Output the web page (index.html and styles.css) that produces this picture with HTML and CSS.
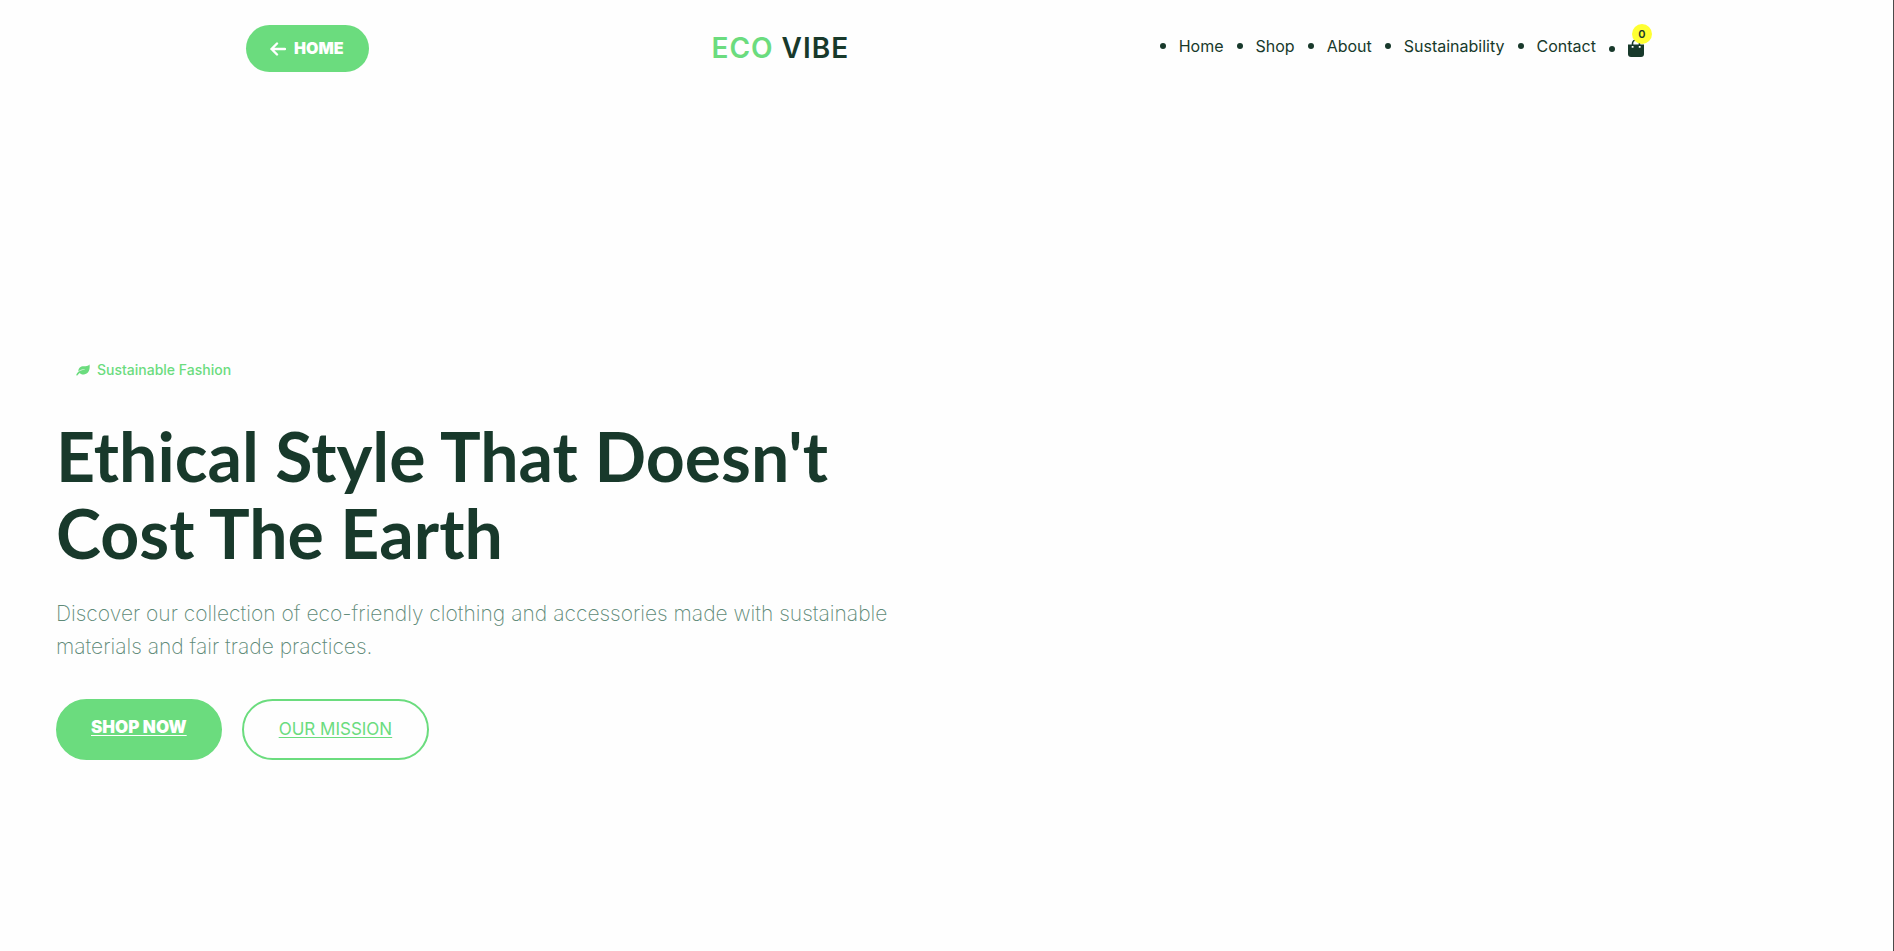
FILE: index.html
```html
<!DOCTYPE html>
<html lang="en">
<head>
<meta charset="utf-8">
<meta name="viewport" content="width=device-width, initial-scale=1">
<title>Eco Vibe</title>
<link rel="stylesheet" href="styles.css">
</head>
<body>
<header class="site-header">
  <div class="header-start">
    <a class="home-button" href="#">
      <svg class="arrow-icon" viewBox="0 0 16 14" aria-hidden="true"><path d="M7 1.500 1.500 7 7 12.500M1.500 7H15" fill="none" stroke="currentColor" stroke-width="2.400" stroke-linecap="round" stroke-linejoin="round"/></svg>
      <span>HOME</span>
    </a>
  </div>
  <a class="logo" href="#"><span class="logo-accent">ECO</span> VIBE</a>
  <nav class="site-nav" aria-label="Main">
    <ul class="nav-list">
      <li><a href="#">Home</a></li>
      <li><a href="#">Shop</a></li>
      <li><a href="#">About</a></li>
      <li><a href="#">Sustainability</a></li>
      <li><a href="#">Contact</a></li>
      <li class="nav-cart">
        <a class="cart" href="#" aria-label="Cart, 0 items">
          <svg class="bag-icon" viewBox="0 0 16 18" aria-hidden="true"><path d="M4.500 8V4.500a3.500 3.500 0 0 1 7 0V8" fill="none" stroke="#18392b" stroke-width="1.600"/><path d="M0 5.500h16v9.500a3 3 0 0 1-3 3H3a3 3 0 0 1-3-3z" fill="#18392b"/><path d="M3.700 7h1.800v1.800H3.700zM10.800 7h1.800v1.800h-1.800z" fill="#fff"/></svg>
          <span class="cart-count">0</span>
        </a>
      </li>
    </ul>
  </nav>
</header>
<main class="hero">
  <p class="tag">
    <svg class="leaf-icon" viewBox="0 0 14 12" aria-hidden="true"><path d="M13.500.5c.7 4-.2 9.500-5.500 10-2 .2-3.600-.5-4.500-1.500L1 11.700l-.8-.6C1 9 2.600 7.400 4.800 6.500 6 6 7.600 5.800 9 5.400 6.500 5.200 4.200 5.900 2.400 7.400 2.300 4 4.500 2.200 7.500 2.200c2.500 0 4.600 0 6-1.700z" fill="currentColor"/></svg>
    <span>Sustainable Fashion</span>
  </p>
  <h1 class="hero-title">Ethical Style That Doesn't Cost The Earth</h1>
  <p class="hero-text">Discover our collection of eco-friendly clothing and accessories made with sustainable materials and fair trade practices.</p>
  <div class="hero-actions">
    <a class="button button-solid" href="#">SHOP NOW</a>
    <a class="button button-outline" href="#">OUR MISSION</a>
  </div>
</main>
</body>
</html>
```
FILE: styles.css
```css
* {
  box-sizing: border-box;
}

body {
  margin: 0;
  min-height: 100vh;
  border-right: 1px solid #4a4a4a;
  background: #fefefe;
  color: #18392b;
  font-family: Inter, "Open Sans", sans-serif;
}

a {
  color: inherit;
}

.site-header {
  display: grid;
  grid-template-columns: 7fr auto 12fr;
  align-items: center;
  padding: 25px 13%;
}

.header-start {
  display: flex;
}

.home-button {
  display: flex;
  align-items: center;
  gap: 8px;
  padding: 12px 25px 12px 24px;
  border-radius: 24px;
  background: #6bdc7e;
  color: #fff;
  font-size: 16px;
  font-weight: 900;
  line-height: 23px;
  text-decoration: none;
}

.arrow-icon {
  width: 16px;
  height: 14px;
}

.logo {
  font-size: 28px;
  font-weight: 600;
  letter-spacing: 1px;
  line-height: 38px;
  padding-bottom: 2px;
  text-decoration: none;
}

.logo-accent {
  color: #6bdc7e;
}

.site-nav {
  justify-self: end;
}

.nav-list {
  display: flex;
  align-items: center;
  gap: 13px;
  margin: 0;
  padding: 0;
  list-style: none;
  font-size: 16px;
  line-height: 24px;
}

.nav-list li {
  display: flex;
  align-items: center;
  gap: 13px;
  padding-bottom: 6px;
}

.nav-list li::before {
  width: 6px;
  height: 6px;
  border-radius: 50%;
  background: #18392b;
  content: "";
}

.nav-list a {
  text-decoration: none;
}

.nav-list .nav-cart {
  padding: 0;
}

.cart {
  position: relative;
  display: flex;
  margin-right: 3px;
  padding-bottom: 2px;
}

.bag-icon {
  width: 16px;
  height: 18px;
}

.cart-count {
  position: absolute;
  top: -15px;
  right: -8px;
  width: 20px;
  height: 20px;
  border-radius: 50%;
  background: #ffff32;
  font-size: 11px;
  font-weight: 600;
  line-height: 20px;
  text-align: center;
}

.hero {
  width: 50%;
  padding: 261px 36px 80px 56px;
}

.tag {
  display: flex;
  align-items: center;
  gap: 7px;
  margin: 0 0 35px;
  padding: 0 20px;
  color: #6bdc7e;
  font-size: 14px;
  font-weight: 500;
  line-height: 24px;
}

.leaf-icon {
  width: 14px;
  height: 12px;
}

.hero-title {
  margin: 0 0 26px;
  font-family: Lato, sans-serif;
  font-size: 68px;
  font-weight: 700;
  line-height: 77px;
}

.hero-text {
  margin: 0 0 36px;
  color: #5f8a78;
  font-size: 21px;
  font-weight: 200;
  line-height: 33px;
}

.hero-actions {
  display: flex;
  gap: 20px;
}

.button {
  border: 2px solid #6bdc7e;
  border-radius: 31px;
  font-size: 17px;
  line-height: 25px;
  text-underline-offset: 2px;
}

.button-solid {
  padding: 14px 33px 18px;
  background: #6bdc7e;
  color: #fff;
  font-weight: 900;
}

.button-outline {
  padding: 16px 35px;
  color: #6bdc7e;
  font-weight: 400;
}
```
